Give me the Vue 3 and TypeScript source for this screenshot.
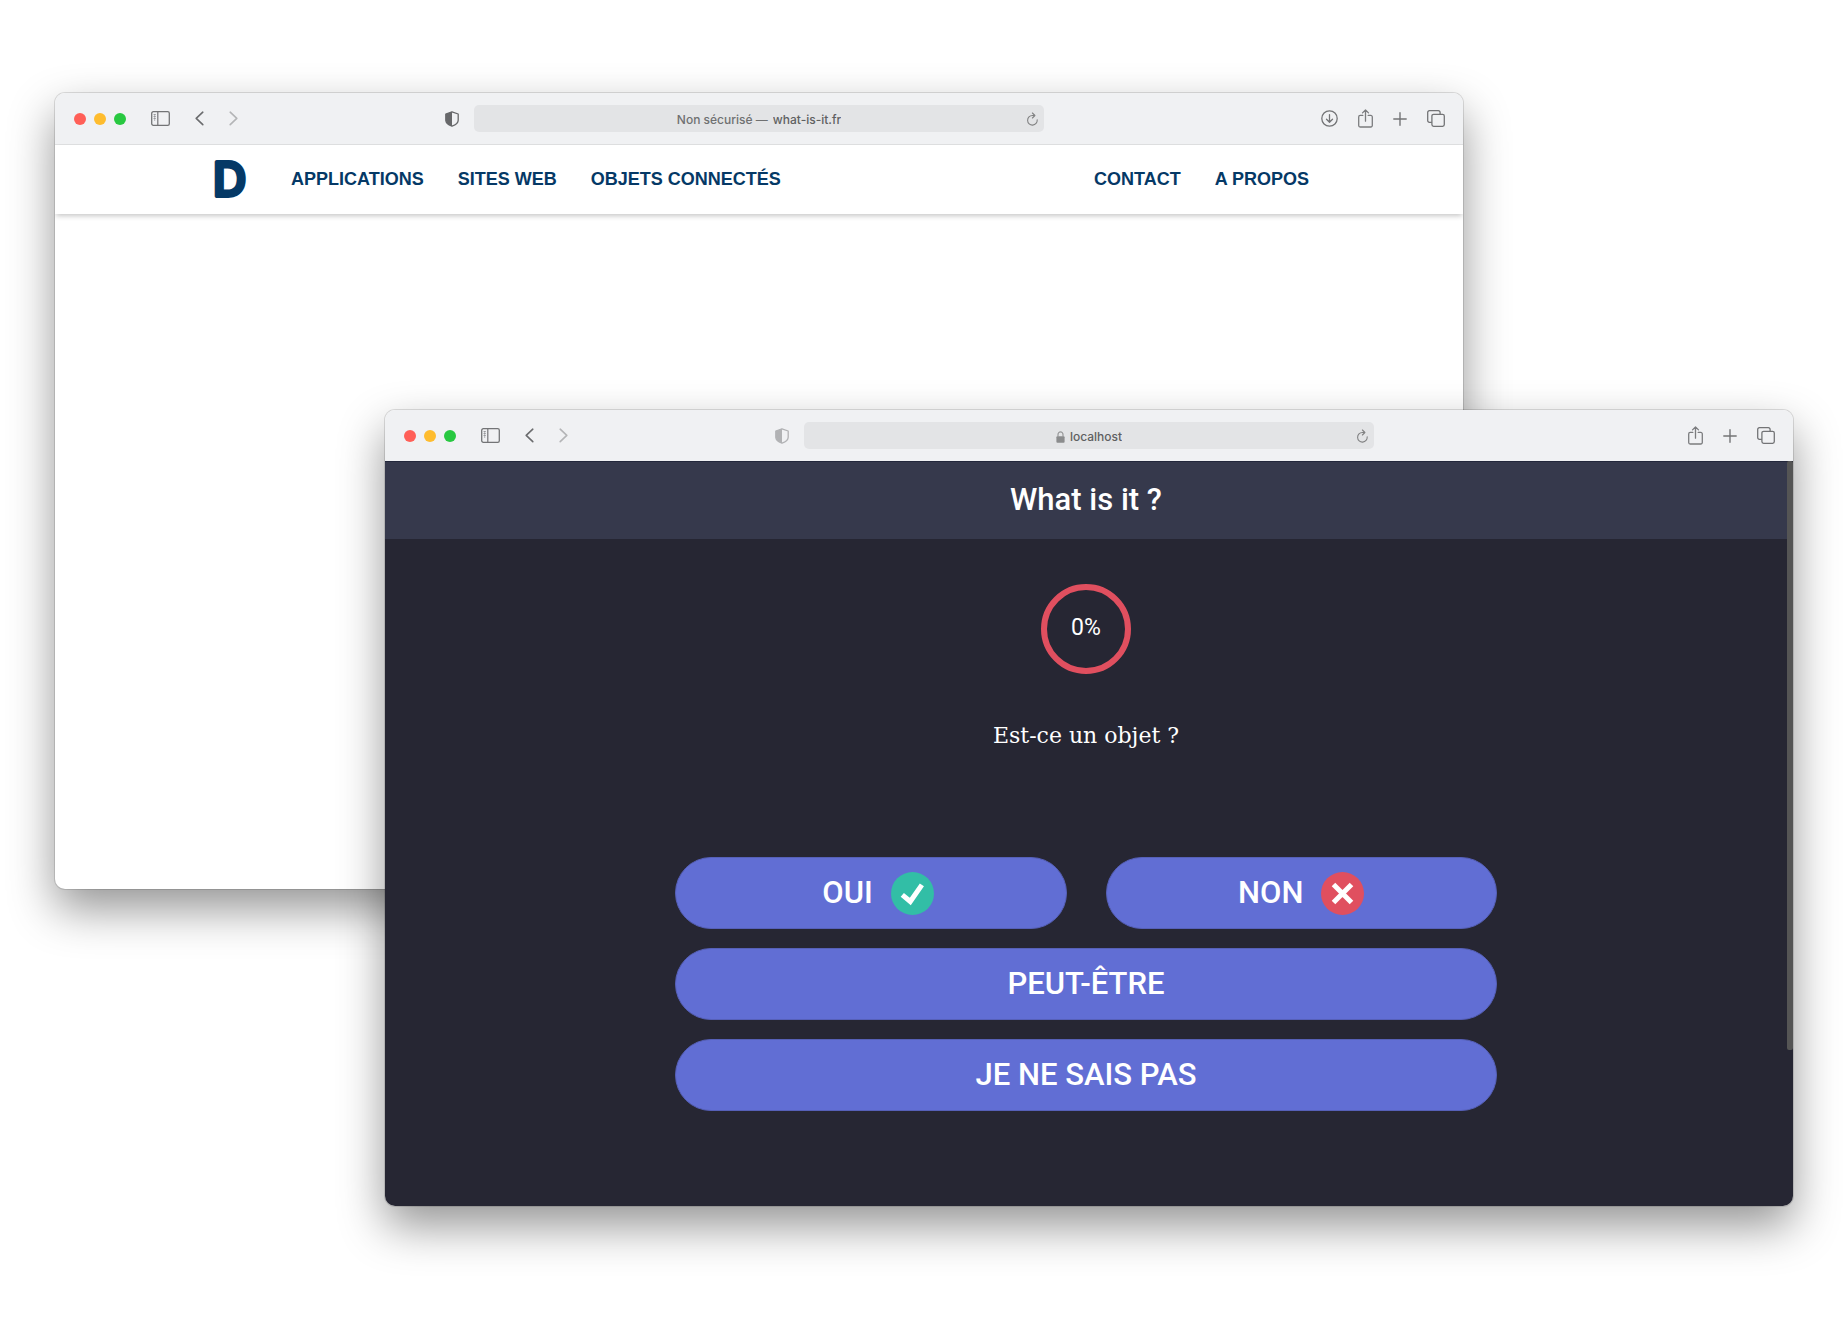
<script setup lang="ts">
import { ref } from 'vue'

interface BrowserWindow {
  id: string
  host: string
  notice: string
  secure: boolean
  downloads: boolean
}

const browsers: BrowserWindow[] = [
  { id: 'site', host: 'what-is-it.fr', notice: 'Non sécurisé —', secure: false, downloads: true },
  { id: 'quiz', host: 'localhost', notice: '', secure: true, downloads: false },
]

const sections: string[] = ['APPLICATIONS', 'SITES WEB', 'OBJETS CONNECTÉS']
const about: string[] = ['CONTACT', 'A PROPOS']
const progress = ref(0)
</script>

<template>
  <div class="desktop">
    <section v-for="b in browsers" :key="b.id" class="window" :class="b.id">
      <div class="toolbar">
        <div class="tools start">
          <div class="lights">
            <button class="light red" aria-label="Fermer"></button>
            <button class="light yellow" aria-label="Réduire"></button>
            <button class="light green" aria-label="Agrandir"></button>
          </div>
          <button aria-label="Barre latérale">
            <svg width="19" height="15" viewBox="0 0 19 15" fill="none" stroke="#737476">
              <rect x="0.7" y="0.7" width="17.6" height="13.6" rx="1.6" stroke-width="1.3" />
              <path d="M6.8 1v13" stroke-width="1.2" />
              <path d="M2.4 3.5h2.6M2.4 5.5h2.6M2.4 7.5h2.6M3.7 3v7" stroke-width="0.7" opacity="0.7" />
            </svg>
          </button>
          <button aria-label="Page précédente">
            <svg width="9" height="15" viewBox="0 0 9 15" fill="none" stroke="#6b6c6e" stroke-width="1.6" stroke-linecap="round" stroke-linejoin="round">
              <path d="M7.8 1.2 1.2 7.4l6.6 6.3" />
            </svg>
          </button>
          <button aria-label="Page suivante">
            <svg width="9" height="15" viewBox="0 0 9 15" fill="none" stroke="#b4b5b7" stroke-width="1.6" stroke-linecap="round" stroke-linejoin="round">
              <path d="M1.2 1.2l6.6 6.2-6.6 6.3" />
            </svg>
          </button>
          <button class="shield" aria-label="Rapport de confidentialité">
            <svg width="14" height="16" viewBox="0 0 14 16">
              <path d="M7 0.8 13.2 3v6.2c0 2.6-2.6 4.6-6.2 6-3.6-1.4-6.2-3.4-6.2-6V3z" fill="none" stroke="currentColor" stroke-width="1.3" stroke-linejoin="round" />
              <path d="M7 0.8V15.2C3.4 13.8 0.8 11.8 0.8 9.2V3z" fill="currentColor" />
            </svg>
          </button>
        </div>

        <div class="address">
          <div class="location">
            <svg v-if="b.secure" class="lock" width="9" height="12" viewBox="0 0 9 12">
              <path d="M2 5.5V3.4a2.5 2.5 0 0 1 5 0v2.1" fill="none" stroke="#98999a" stroke-width="1.2" />
              <rect x="0.4" y="5.2" width="8.2" height="6.6" rx="1" fill="#8b8c8d" />
            </svg>
            <label v-if="b.notice" :for="b.id + '-url'">{{ b.notice }}</label>
            <input :id="b.id + '-url'" type="text" :value="b.host" aria-label="Adresse" />
          </div>
          <button class="reload" aria-label="Recharger">
            <svg width="11" height="14" viewBox="0 0 11 14" fill="none" stroke="#808182" stroke-width="1.1" stroke-linecap="round" stroke-linejoin="round">
              <path d="M10.2 7.9A4.8 4.8 0 1 1 5.4 3.5h2" />
              <path d="M5.4 1 7.9 3.5 5.4 6" />
            </svg>
          </button>
        </div>

        <div class="tools end">
          <button v-if="b.downloads" aria-label="Téléchargements">
            <svg width="17" height="17" viewBox="0 0 17 17" fill="none" stroke="#737476" stroke-width="1.3" stroke-linecap="round" stroke-linejoin="round">
              <circle cx="8.5" cy="8.5" r="7.7" />
              <path d="M8.5 4.6v7.6M5.5 9.3l3 3 3-3" />
            </svg>
          </button>
          <button aria-label="Partager">
            <svg width="15" height="19" viewBox="0 0 15 19" fill="none" stroke="#7b7c7e" stroke-width="1.3" stroke-linecap="round" stroke-linejoin="round">
              <path d="M4.8 6.4H2.2A1.5 1.5 0 0 0 .7 7.9v8.6A1.5 1.5 0 0 0 2.2 18h10.6a1.5 1.5 0 0 0 1.5-1.5V7.9a1.5 1.5 0 0 0-1.5-1.5h-2.6" />
              <path d="M7.5 12.2V1.2M4.5 3.9l3-2.9 3 2.9" />
            </svg>
          </button>
          <button aria-label="Nouvel onglet">
            <svg width="14" height="14" viewBox="0 0 14 14" fill="none" stroke="#737476" stroke-width="1.4" stroke-linecap="round">
              <path d="M7 .8v12.4M.8 7h12.4" />
            </svg>
          </button>
          <button aria-label="Aperçu des onglets">
            <svg width="18" height="17" viewBox="0 0 18 17" fill="none" stroke="#737476" stroke-width="1.3">
              <path d="M4.9 12.3H2.4A1.7 1.7 0 0 1 .7 10.6V2.4A1.7 1.7 0 0 1 2.4.7h9a1.7 1.7 0 0 1 1.7 1.7v1.9" />
              <rect x="4.9" y="4.3" width="12.4" height="12" rx="1.7" />
            </svg>
          </button>
        </div>
      </div>

      <nav v-if="b.id === 'site'" class="site-nav">
        <a class="logo" href="#" aria-label="Accueil">
          <svg width="50" height="60" viewBox="0 0 50 60">
            <text x="6" y="47" class="logo-letter">D</text>
          </svg>
        </a>
        <a v-for="s in sections" :key="s" href="#">{{ s }}</a>
        <span class="spacer"></span>
        <a v-for="s in about" :key="s" href="#">{{ s }}</a>
      </nav>

      <div v-else class="viewport">
        <div class="page">
          <header><h1>What is it ?</h1></header>
          <main>
            <div class="progress">{{ progress }}%</div>
            <p class="question">Est-ce un objet ?</p>
            <div class="answers">
              <button>
                <span class="label">OUI</span>
                <svg width="43" height="43" viewBox="0 0 43 43">
                  <circle cx="21.5" cy="21.5" r="21.5" fill="#32bea6" />
                  <path d="M11.3 22.8l8 6.7 11.6-16.6" fill="none" stroke="#fff" stroke-width="5" />
                </svg>
              </button>
              <button>
                <span class="label">NON</span>
                <svg width="43" height="43" viewBox="0 0 43 43">
                  <circle cx="21.5" cy="21.5" r="21.5" fill="#e04f5f" />
                  <path d="M12.5 12.5l18 18M30.5 12.5l-18 18" fill="none" stroke="#fff" stroke-width="5" />
                </svg>
              </button>
              <button class="wide">PEUT-ÊTRE</button>
              <button class="wide">JE NE SAIS PAS</button>
            </div>
          </main>
        </div>
        <div class="scrollbar"><div class="thumb"></div></div>
      </div>
    </section>
  </div>
</template>

<style>
body {
  background: #fff;
}
</style>

<style scoped>
.desktop {
  position: relative;
  min-height: max(100vh, 1000px);
  overflow: hidden;
  font-family: Roboto, sans-serif;
}
button {
  border: 0;
  padding: 0;
  background: none;
  font: inherit;
  color: inherit;
  cursor: pointer;
}
svg {
  display: block;
}
.window {
  position: absolute;
  display: flex;
  flex-direction: column;
  border-radius: 10px;
  background: #fff;
  box-shadow: 0 0 0 1px rgba(0, 0, 0, 0.12), 0 20px 46px rgba(0, 0, 0, 0.42);
  overflow: hidden;
}
.site {
  inset: 93px 385px 444px 55px;
}
.quiz {
  inset: 410px 55px 127px 385px;
}
.toolbar {
  display: grid;
  grid-template-columns: 1fr 570px 1fr;
  align-items: center;
  height: 51px;
  background: #f0f1f3;
}
.site .toolbar {
  border-bottom: 1px solid #dfe0e1;
}
.tools {
  display: flex;
  align-items: center;
}
.start {
  gap: 25px;
  padding: 0 15px 0 19px;
}
.end {
  justify-content: flex-end;
  gap: 20px;
  padding-right: 18px;
}
.lights {
  display: flex;
  gap: 8px;
}
.light {
  width: 12px;
  height: 12px;
  border-radius: 50%;
}
.red {
  background: #ff5f57;
}
.yellow {
  background: #febc2e;
}
.green {
  background: #28c840;
}
.shield {
  margin-left: auto;
  color: #67686a;
}
.quiz .shield {
  color: #b1b2b4;
}
.address {
  display: grid;
  grid-template-columns: 1fr auto 1fr;
  align-items: center;
  height: 27px;
  padding: 0 6px;
  border-radius: 5px;
  background: #e3e4e6;
}
.location {
  grid-column: 2;
  display: flex;
  align-items: center;
  gap: 5px;
  padding-top: 3px;
  font: 500 12px/16px Inter, sans-serif;
  color: #6f7071;
}
.location input {
  field-sizing: content;
  border: 0;
  padding: 0;
  background: none;
  font: inherit;
  color: #5f6061;
  outline: none;
}
.reload {
  justify-self: end;
}
.site-nav {
  display: flex;
  align-items: center;
  gap: 34px;
  height: 69px;
  padding: 0 154px 0 152px;
  box-shadow: 0 3px 5px -1px rgba(0, 0, 0, 0.22);
}
.site-nav a {
  padding-bottom: 2px;
  font: 700 18px/24px "Liberation Sans", Arial, sans-serif;
  color: #053966;
  text-decoration: none;
}
.logo-letter {
  font: 500 46px Inter, sans-serif;
  fill: #053966;
  stroke: #053966;
  stroke-width: 4px;
  stroke-linejoin: round;
}
.spacer {
  flex: 1;
}
.viewport {
  flex: 1;
  display: flex;
  background: #262633;
}
.page {
  flex: 1;
}
header {
  display: flex;
  align-items: center;
  justify-content: center;
  height: 78px;
  box-sizing: border-box;
  padding-bottom: 1px;
  border-top: 1px solid #23273b;
  background: #36394c;
}
h1 {
  margin: 0;
  font-size: 31px;
  line-height: 40px;
  font-weight: 500;
  color: #fff;
}
main {
  display: flex;
  flex-direction: column;
  align-items: center;
  padding-top: 45px;
  color: #fff;
}
.progress {
  display: flex;
  align-items: center;
  justify-content: center;
  width: 90px;
  height: 90px;
  box-sizing: border-box;
  padding-bottom: 2px;
  border: 6px solid #e04f5f;
  border-radius: 50%;
  font-size: 23px;
  line-height: 32px;
}
.question {
  margin: 46px 0 105px;
  font: 22px/32px "DejaVu Serif", serif;
}
.answers {
  display: grid;
  grid-template-columns: 1fr 1fr;
  gap: 19px 39px;
  width: 822px;
}
.answers button {
  display: flex;
  align-items: center;
  justify-content: center;
  gap: 18px;
  height: 72px;
  border: 1px solid #5660b8;
  border-radius: 36px;
  background: #616ed4;
  font-size: 31px;
  line-height: 40px;
  font-weight: 500;
}
.answers .wide {
  grid-column: span 2;
}
.label {
  min-width: 65px;
  text-align: right;
}
.scrollbar {
  width: 6px;
}
.thumb {
  height: 79%;
  border-radius: 2px;
  background: #555;
}
</style>
